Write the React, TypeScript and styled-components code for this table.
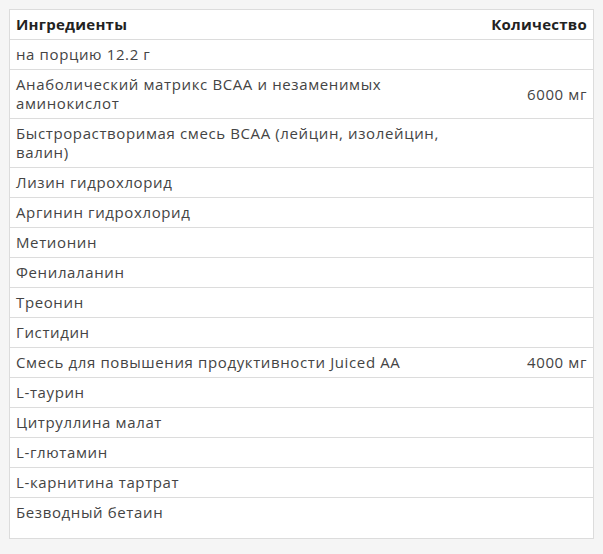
import React from "react";
import styled, { createGlobalStyle } from "styled-components";

const Global = createGlobalStyle`
  html, body { margin: 0; padding: 0; background: #f5f5f5; }
  body { font-family: "Open Sans", "Noto Sans", sans-serif; }
`;

const Page = styled.div`
  padding: 9px 9px 16px 9px;
`;

const Table = styled.table`
  width: 585px;
  border-collapse: collapse;
  background: #fff;
  border: 1px solid #dcdcdc;
  font-size: 15px;
  line-height: 19px;
  color: #444;
`;

const Th = styled.th<{ $right?: boolean }>`
  padding: 5px 6px 5px 6px;
  text-align: ${(p) => (p.$right ? "right" : "left")};
  font-weight: 700;
  letter-spacing: 0.25px;
  color: #222;
  border-bottom: 1px solid #dcdcdc;
  vertical-align: middle;
`;

const Td = styled.td<{ $right?: boolean; $last?: boolean }>`
  padding: 5px 6px ${(p) => (p.$last ? "16px" : "5px")} 6px;
  text-align: ${(p) => (p.$right ? "right" : "left")};
  letter-spacing: 0.62px;
  border-bottom: 1px solid #dcdcdc;
  vertical-align: ${(p) => (p.$right ? "middle" : "top")};
  white-space: ${(p) => (p.$right ? "nowrap" : "normal")};
`;

const rows: [string, string][] = [
  ["на порцию 12.2 г", ""],
  ["Анаболический матрикс BCAA и незаменимых аминокислот", "6000 мг"],
  ["Быстрорастворимая смесь BCAA (лейцин, изолейцин, валин)", ""],
  ["Лизин гидрохлорид", ""],
  ["Аргинин гидрохлорид", ""],
  ["Метионин", ""],
  ["Фенилаланин", ""],
  ["Треонин", ""],
  ["Гистидин", ""],
  ["Смесь для повышения продуктивности Juiced AA", "4000 мг"],
  ["L-таурин", ""],
  ["Цитруллина малат", ""],
  ["L-глютамин", ""],
  ["L-карнитина тартрат", ""],
  ["Безводный бетаин", ""],
];

export default function App() {
  return (
    <>
      <Global />
      <Page>
        <Table>
          <colgroup>
            <col style={{ width: 478 }} />
            <col />
          </colgroup>
          <thead>
            <tr>
              <Th>Ингредиенты</Th>
              <Th $right>Количество</Th>
            </tr>
          </thead>
          <tbody>
            {rows.map(([name, qty], i) => (
              <tr key={i}>
                <Td $last={i === rows.length - 1}>{name}</Td>
                <Td $right $last={i === rows.length - 1}>{qty}</Td>
              </tr>
            ))}
          </tbody>
        </Table>
      </Page>
    </>
  );
}
